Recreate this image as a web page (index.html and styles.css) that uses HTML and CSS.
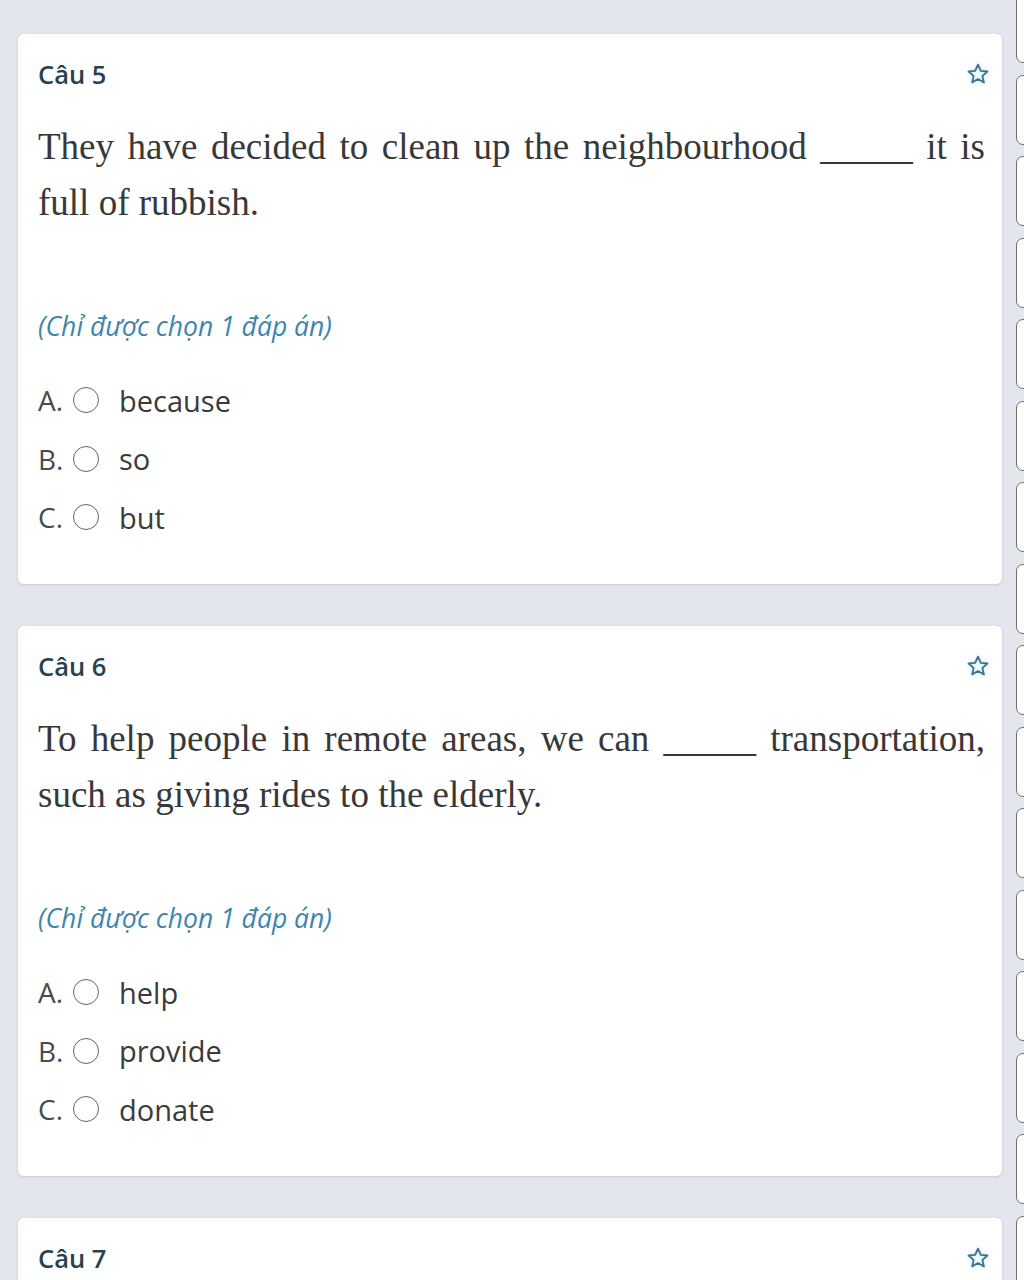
FILE: index.html
```html
<!DOCTYPE html>
<html lang="vi">
<head>
    <meta charset="UTF-8">
    <title>Bài tập</title>
    <meta name="viewport" content="width=device-width, initial-scale=1.0">
    <link rel="stylesheet" href="styles.css">
</head>
<body>
    <div class="page">
        <main class="questions">
            <section class="card">
                <div class="card-head">
                    <h2 class="q-title">Câu 5</h2>
                    <svg class="star" viewBox="0 0 24 24" width="24" height="24"><polygon points="12,2.6 14.8,8.9 21.5,9.5 16.4,13.9 17.9,20.6 12,17.1 6.1,20.6 7.6,13.9 2.5,9.5 9.2,8.9"/></svg>
                </div>
                <p class="q-text">They have decided to clean up the neighbourhood _____ it is full of rubbish.</p>
                <p class="hint">(Chỉ được chọn 1 đáp án)</p>
                <ul class="options">
                    <li><span class="label">A.</span><span class="radio"></span><span class="answer">because</span></li>
                    <li><span class="label">B.</span><span class="radio"></span><span class="answer">so</span></li>
                    <li><span class="label">C.</span><span class="radio"></span><span class="answer">but</span></li>
                </ul>
            </section>

            <section class="card">
                <div class="card-head">
                    <h2 class="q-title">Câu 6</h2>
                    <svg class="star" viewBox="0 0 24 24" width="24" height="24"><polygon points="12,2.6 14.8,8.9 21.5,9.5 16.4,13.9 17.9,20.6 12,17.1 6.1,20.6 7.6,13.9 2.5,9.5 9.2,8.9"/></svg>
                </div>
                <p class="q-text">To help people in remote areas, we can _____ transportation, such as giving rides to the elderly.</p>
                <p class="hint">(Chỉ được chọn 1 đáp án)</p>
                <ul class="options">
                    <li><span class="label">A.</span><span class="radio"></span><span class="answer">help</span></li>
                    <li><span class="label">B.</span><span class="radio"></span><span class="answer">provide</span></li>
                    <li><span class="label">C.</span><span class="radio"></span><span class="answer">donate</span></li>
                </ul>
            </section>

            <section class="card">
                <div class="card-head">
                    <h2 class="q-title">Câu 7</h2>
                    <svg class="star" viewBox="0 0 24 24" width="24" height="24"><polygon points="12,2.6 14.8,8.9 21.5,9.5 16.4,13.9 17.9,20.6 12,17.1 6.1,20.6 7.6,13.9 2.5,9.5 9.2,8.9"/></svg>
                </div>
            </section>
        </main>

        <!-- question navigator, mostly off screen -->
        <aside class="nav">
            <div class="nav-box"></div>
            <div class="nav-box"></div>
            <div class="nav-box"></div>
            <div class="nav-box"></div>
            <div class="nav-box"></div>
            <div class="nav-box"></div>
            <div class="nav-box"></div>
            <div class="nav-box"></div>
            <div class="nav-box"></div>
            <div class="nav-box"></div>
            <div class="nav-box"></div>
            <div class="nav-box"></div>
            <div class="nav-box"></div>
            <div class="nav-box"></div>
            <div class="nav-box"></div>
            <div class="nav-box"></div>
            <div class="nav-box"></div>
        </aside>
    </div>
</body>
</html>
```

FILE: styles.css
```css
html, body {
    margin: 0;
    height: 100%;
    overflow: hidden;
}

body {
    background: #e3e6ed;
    font-family: 'Open Sans', 'Noto Sans', sans-serif;
    color: #333;
}

.page {
    display: flex;
    align-items: flex-start;
    gap: 14px;
    padding-left: 18px;
}

.questions {
    width: 984px;
    flex-shrink: 0;
    display: flex;
    flex-direction: column;
    gap: 42px;
    padding-top: 34px;
}

.card {
    background: #fff;
    border-radius: 6px;
    box-shadow: 0 1px 3px rgba(60, 70, 90, 0.18);
    padding: 20px 17px 37px 20px;
    min-height: 493px;
}

.card-head {
    display: flex;
    align-items: center;
    justify-content: space-between;
    height: 40px;
}

.q-title {
    margin: 0;
    font-size: 25.5px;
    font-weight: 600;
    color: #25424f;
}

.star {
    margin-right: -5px;
    fill: none;
    stroke: #3f7189;
    stroke-width: 1.8;
    stroke-linejoin: round;
    filter: drop-shadow(0 0 2px rgba(120, 220, 240, 0.6));
}

.q-text {
    margin: 25px 0 0;
    font-family: 'Liberation Serif', serif;
    font-size: 37px;
    line-height: 56px;
    color: #383838;
    text-align: justify;
}

.hint {
    margin: 77px 0 0;
    font-style: italic;
    font-size: 26.5px;
    line-height: 36px;
    color: #3d86aa;
}

.options {
    list-style: none;
    margin: 27px 0 0;
    padding: 0;
}

.options li {
    display: flex;
    align-items: center;
    height: 58.5px;
}

.label {
    width: 35px;
    font-size: 28px;
    color: #4a4a4a;
}

.radio {
    width: 24px;
    height: 24px;
    border: 1.6px solid #666;
    border-radius: 50%;
    margin-right: 20px;
}

.answer {
    font-size: 29px;
    color: #3b3b3b;
}

.nav {
    display: flex;
    flex-direction: column;
    gap: 11.5px;
    margin-top: -7px;
}

.nav-box {
    width: 40px;
    height: 70px;
    background: #fff;
    border: 1.5px solid #6f6f6f;
    border-radius: 7px;
    box-sizing: border-box;
}
```
